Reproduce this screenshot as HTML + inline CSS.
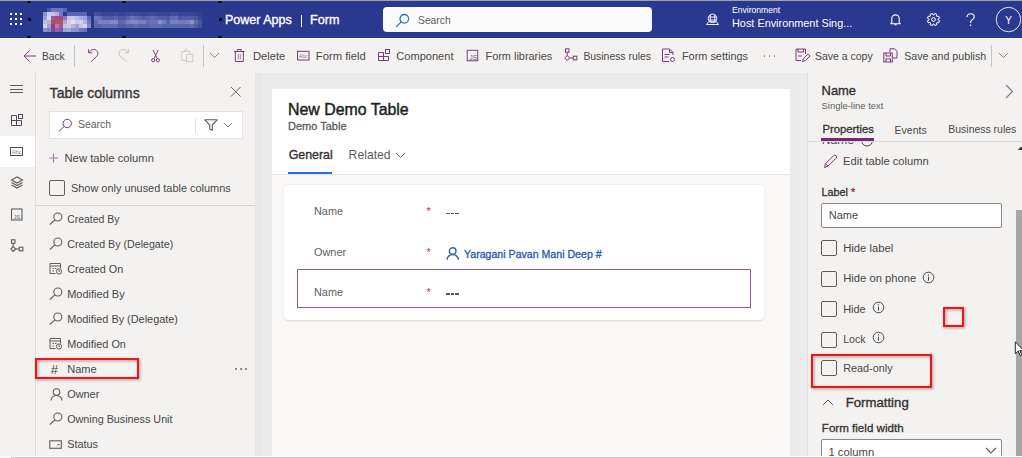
<!DOCTYPE html>
<html><head><meta charset="utf-8"><style>
html,body{margin:0;padding:0;width:1022px;height:458px;overflow:hidden;background:#f3f2f1}
body{position:relative;font-family:"Liberation Sans",sans-serif;-webkit-font-smoothing:antialiased}
.r{position:absolute;display:block}
.t{position:absolute;white-space:nowrap;line-height:1;font-family:"Liberation Sans",sans-serif}
</style></head><body>
<div class="r" style="left:0px;top:1px;width:1022px;height:37px;background:#2a3990"></div>
<div class="r" style="left:0px;top:0px;width:1022px;height:1.4px;background:#a4a49e"></div>
<div class="r" style="left:0px;top:38px;width:1022px;height:35px;background:#f3f2f1"></div>
<div class="r" style="left:0px;top:73px;width:35px;height:383px;background:#f3f2f1"></div>
<div class="r" style="left:35px;top:73px;width:1px;height:383px;background:#e1dfdd"></div>
<div class="r" style="left:0px;top:136px;width:35px;height:31px;background:#ffffff"></div>
<div class="r" style="left:36px;top:73px;width:219px;height:383px;background:#f3f2f1"></div>
<div class="r" style="left:255px;top:73px;width:7px;height:383px;background:#e7e7e7"></div>
<div class="r" style="left:262px;top:73px;width:546px;height:383px;background:#ebebeb"></div>
<div class="r" style="left:272px;top:89px;width:518px;height:85px;background:#ffffff"></div>
<div class="r" style="left:272px;top:174px;width:518px;height:1px;background:#e6e5e4"></div>
<div class="r" style="left:272px;top:175px;width:518px;height:281px;background:#f9f8f7"></div>
<div class="r" style="left:807px;top:73px;width:1px;height:383px;background:#e1dfdd"></div>
<div class="r" style="left:808px;top:73px;width:214px;height:383px;background:#f3f2f1"></div>
<div class="r" style="left:0px;top:456px;width:1022px;height:1px;background:#fbfbfb"></div>
<div class="r" style="left:0px;top:457px;width:1022px;height:1px;background:#c9c9c9"></div>
<div class="r" style="left:10px;top:13px;width:2px;height:2px;background:#fff"></div>
<div class="r" style="left:10px;top:18px;width:2px;height:2px;background:#fff"></div>
<div class="r" style="left:10px;top:23px;width:2px;height:2px;background:#fff"></div>
<div class="r" style="left:15px;top:13px;width:2px;height:2px;background:#fff"></div>
<div class="r" style="left:15px;top:18px;width:2px;height:2px;background:#fff"></div>
<div class="r" style="left:15px;top:23px;width:2px;height:2px;background:#fff"></div>
<div class="r" style="left:20px;top:13px;width:2px;height:2px;background:#fff"></div>
<div class="r" style="left:20px;top:18px;width:2px;height:2px;background:#fff"></div>
<div class="r" style="left:20px;top:23px;width:2px;height:2px;background:#fff"></div>
<div class="r" style="left:43px;top:8px;width:164px;height:24px;filter:blur(0.7px)"><div class="r" style="left:4px;top:0px;width:4px;height:4px;background:#4a56a8"></div><div class="r" style="left:8px;top:0px;width:4px;height:4px;background:#6a74c0"></div><div class="r" style="left:12px;top:0px;width:4px;height:4px;background:#6a74c0"></div><div class="r" style="left:16px;top:0px;width:4px;height:4px;background:#6a74c0"></div><div class="r" style="left:20px;top:0px;width:4px;height:4px;background:#5a64b4"></div><div class="r" style="left:0px;top:4px;width:4px;height:4px;background:#8a92d0"></div><div class="r" style="left:4px;top:4px;width:4px;height:4px;background:#c8ccec"></div><div class="r" style="left:8px;top:4px;width:4px;height:4px;background:#c0c4e8"></div><div class="r" style="left:12px;top:4px;width:4px;height:4px;background:#c8a8d0"></div><div class="r" style="left:16px;top:4px;width:4px;height:4px;background:#7078c0"></div><div class="r" style="left:24px;top:4px;width:4px;height:4px;background:#5a64b4"></div><div class="r" style="left:28px;top:4px;width:4px;height:4px;background:#5a64b4"></div><div class="r" style="left:32px;top:4px;width:4px;height:4px;background:#5a64b4"></div><div class="r" style="left:36px;top:4px;width:4px;height:4px;background:#5a64b4"></div><div class="r" style="left:40px;top:4px;width:4px;height:4px;background:#5a64b4"></div><div class="r" style="left:0px;top:8px;width:4px;height:4px;background:#9ca2d8"></div><div class="r" style="left:4px;top:8px;width:4px;height:4px;background:#d8dcf2"></div><div class="r" style="left:8px;top:8px;width:4px;height:4px;background:#9a5aa0"></div><div class="r" style="left:12px;top:8px;width:4px;height:4px;background:#a04a80"></div><div class="r" style="left:16px;top:8px;width:4px;height:4px;background:#9a4a88"></div><div class="r" style="left:20px;top:8px;width:4px;height:4px;background:#8a78c0"></div><div class="r" style="left:24px;top:8px;width:4px;height:4px;background:#c0c4e8"></div><div class="r" style="left:28px;top:8px;width:4px;height:4px;background:#c8cce8"></div><div class="r" style="left:32px;top:8px;width:4px;height:4px;background:#b8bce4"></div><div class="r" style="left:36px;top:8px;width:4px;height:4px;background:#a8aee0"></div><div class="r" style="left:40px;top:8px;width:4px;height:4px;background:#9aa0d8"></div><div class="r" style="left:44px;top:8px;width:4px;height:4px;background:#6068b8"></div><div class="r" style="left:0px;top:12px;width:4px;height:4px;background:#b8bce6"></div><div class="r" style="left:4px;top:12px;width:4px;height:4px;background:#b0b6e2"></div><div class="r" style="left:8px;top:12px;width:4px;height:4px;background:#a84a78"></div><div class="r" style="left:12px;top:12px;width:4px;height:4px;background:#b8505a"></div><div class="r" style="left:16px;top:12px;width:4px;height:4px;background:#b05068"></div><div class="r" style="left:20px;top:12px;width:4px;height:4px;background:#c8a0c0"></div><div class="r" style="left:24px;top:12px;width:4px;height:4px;background:#d0d4f0"></div><div class="r" style="left:28px;top:12px;width:4px;height:4px;background:#e0e2f4"></div><div class="r" style="left:32px;top:12px;width:4px;height:4px;background:#c8cce8"></div><div class="r" style="left:36px;top:12px;width:4px;height:4px;background:#d0d2ee"></div><div class="r" style="left:40px;top:12px;width:4px;height:4px;background:#b0b4e0"></div><div class="r" style="left:44px;top:12px;width:4px;height:4px;background:#7078c0"></div><div class="r" style="left:0px;top:16px;width:4px;height:4px;background:#d0d4f0"></div><div class="r" style="left:4px;top:16px;width:4px;height:4px;background:#9aa0d8"></div><div class="r" style="left:8px;top:16px;width:4px;height:4px;background:#9a3a80"></div><div class="r" style="left:12px;top:16px;width:4px;height:4px;background:#c87898"></div><div class="r" style="left:16px;top:16px;width:4px;height:4px;background:#8a60a8"></div><div class="r" style="left:20px;top:16px;width:4px;height:4px;background:#c0c4e8"></div><div class="r" style="left:24px;top:16px;width:4px;height:4px;background:#c8cce8"></div><div class="r" style="left:28px;top:16px;width:4px;height:4px;background:#b0b4e0"></div><div class="r" style="left:32px;top:16px;width:4px;height:4px;background:#9ca2d8"></div><div class="r" style="left:36px;top:16px;width:4px;height:4px;background:#c0c4e8"></div><div class="r" style="left:40px;top:16px;width:4px;height:4px;background:#d0d4ee"></div><div class="r" style="left:44px;top:16px;width:4px;height:4px;background:#8088c8"></div><div class="r" style="left:0px;top:20px;width:4px;height:4px;background:#8a92d0"></div><div class="r" style="left:4px;top:20px;width:4px;height:4px;background:#8088c8"></div><div class="r" style="left:8px;top:20px;width:4px;height:4px;background:#6a50a8"></div><div class="r" style="left:12px;top:20px;width:4px;height:4px;background:#9a60a0"></div><div class="r" style="left:16px;top:20px;width:4px;height:4px;background:#7a5ab0"></div><div class="r" style="left:20px;top:20px;width:4px;height:4px;background:#9aa0d8"></div><div class="r" style="left:24px;top:20px;width:4px;height:4px;background:#a0a6da"></div><div class="r" style="left:28px;top:20px;width:4px;height:4px;background:#8a90d0"></div><div class="r" style="left:32px;top:20px;width:4px;height:4px;background:#8a90d0"></div><div class="r" style="left:36px;top:20px;width:4px;height:4px;background:#7078c0"></div><div class="r" style="left:40px;top:20px;width:4px;height:4px;background:#6870bc"></div><div class="r" style="left:51px;top:4px;width:4px;height:4px;background:rgb(66,80,158)"></div><div class="r" style="left:51px;top:8px;width:4px;height:4px;background:rgb(113,123,185)"></div><div class="r" style="left:51px;top:12px;width:4px;height:4px;background:rgb(97,108,176)"></div><div class="r" style="left:51px;top:16px;width:4px;height:4px;background:rgb(89,101,171)"></div><div class="r" style="left:55px;top:4px;width:4px;height:4px;background:rgb(64,77,156)"></div><div class="r" style="left:55px;top:8px;width:4px;height:4px;background:rgb(105,115,180)"></div><div class="r" style="left:55px;top:12px;width:4px;height:4px;background:rgb(121,130,190)"></div><div class="r" style="left:55px;top:16px;width:4px;height:4px;background:rgb(89,101,171)"></div><div class="r" style="left:59px;top:4px;width:4px;height:4px;background:rgb(55,69,152)"></div><div class="r" style="left:59px;top:8px;width:4px;height:4px;background:rgb(81,93,167)"></div><div class="r" style="left:59px;top:12px;width:4px;height:4px;background:rgb(121,130,190)"></div><div class="r" style="left:59px;top:16px;width:4px;height:4px;background:rgb(97,108,176)"></div><div class="r" style="left:63px;top:4px;width:4px;height:4px;background:rgb(55,69,152)"></div><div class="r" style="left:63px;top:8px;width:4px;height:4px;background:rgb(81,93,167)"></div><div class="r" style="left:63px;top:12px;width:4px;height:4px;background:rgb(121,130,190)"></div><div class="r" style="left:63px;top:16px;width:4px;height:4px;background:rgb(97,108,176)"></div><div class="r" style="left:67px;top:4px;width:4px;height:4px;background:rgb(55,69,152)"></div><div class="r" style="left:67px;top:8px;width:4px;height:4px;background:rgb(81,93,167)"></div><div class="r" style="left:67px;top:12px;width:4px;height:4px;background:rgb(128,137,194)"></div><div class="r" style="left:67px;top:16px;width:4px;height:4px;background:rgb(97,108,176)"></div><div class="r" style="left:71px;top:4px;width:4px;height:4px;background:rgb(58,72,153)"></div><div class="r" style="left:71px;top:8px;width:4px;height:4px;background:rgb(89,101,171)"></div><div class="r" style="left:71px;top:12px;width:4px;height:4px;background:rgb(128,137,194)"></div><div class="r" style="left:71px;top:16px;width:4px;height:4px;background:rgb(97,108,176)"></div><div class="r" style="left:75px;top:4px;width:4px;height:4px;background:rgb(53,67,150)"></div><div class="r" style="left:75px;top:8px;width:4px;height:4px;background:rgb(73,86,162)"></div><div class="r" style="left:75px;top:12px;width:4px;height:4px;background:rgb(89,101,171)"></div><div class="r" style="left:75px;top:16px;width:4px;height:4px;background:rgb(81,93,167)"></div><div class="r" style="left:79px;top:4px;width:4px;height:4px;background:rgb(53,67,150)"></div><div class="r" style="left:79px;top:8px;width:4px;height:4px;background:rgb(73,86,162)"></div><div class="r" style="left:79px;top:12px;width:4px;height:4px;background:rgb(97,108,176)"></div><div class="r" style="left:79px;top:16px;width:4px;height:4px;background:rgb(81,93,167)"></div><div class="r" style="left:83px;top:4px;width:4px;height:4px;background:rgb(58,72,153)"></div><div class="r" style="left:83px;top:8px;width:4px;height:4px;background:rgb(89,101,171)"></div><div class="r" style="left:83px;top:12px;width:4px;height:4px;background:rgb(121,130,190)"></div><div class="r" style="left:83px;top:16px;width:4px;height:4px;background:rgb(89,101,171)"></div><div class="r" style="left:87px;top:4px;width:4px;height:4px;background:rgb(64,77,156)"></div><div class="r" style="left:87px;top:8px;width:4px;height:4px;background:rgb(105,115,180)"></div><div class="r" style="left:87px;top:12px;width:4px;height:4px;background:rgb(128,137,194)"></div><div class="r" style="left:87px;top:16px;width:4px;height:4px;background:rgb(89,101,171)"></div><div class="r" style="left:91px;top:4px;width:4px;height:4px;background:rgb(61,75,155)"></div><div class="r" style="left:91px;top:8px;width:4px;height:4px;background:rgb(97,108,176)"></div><div class="r" style="left:91px;top:12px;width:4px;height:4px;background:rgb(128,137,194)"></div><div class="r" style="left:91px;top:16px;width:4px;height:4px;background:rgb(97,108,176)"></div><div class="r" style="left:95px;top:4px;width:4px;height:4px;background:rgb(58,72,153)"></div><div class="r" style="left:95px;top:8px;width:4px;height:4px;background:rgb(89,101,171)"></div><div class="r" style="left:95px;top:12px;width:4px;height:4px;background:rgb(121,130,190)"></div><div class="r" style="left:95px;top:16px;width:4px;height:4px;background:rgb(89,101,171)"></div><div class="r" style="left:99px;top:4px;width:4px;height:4px;background:rgb(55,69,152)"></div><div class="r" style="left:99px;top:8px;width:4px;height:4px;background:rgb(81,93,167)"></div><div class="r" style="left:99px;top:12px;width:4px;height:4px;background:rgb(121,130,190)"></div><div class="r" style="left:99px;top:16px;width:4px;height:4px;background:rgb(89,101,171)"></div><div class="r" style="left:103px;top:4px;width:4px;height:4px;background:rgb(58,72,153)"></div><div class="r" style="left:103px;top:8px;width:4px;height:4px;background:rgb(89,101,171)"></div><div class="r" style="left:103px;top:12px;width:4px;height:4px;background:rgb(97,108,176)"></div><div class="r" style="left:103px;top:16px;width:4px;height:4px;background:rgb(89,101,171)"></div><div class="r" style="left:107px;top:4px;width:4px;height:4px;background:rgb(61,75,155)"></div><div class="r" style="left:107px;top:8px;width:4px;height:4px;background:rgb(97,108,176)"></div><div class="r" style="left:107px;top:12px;width:4px;height:4px;background:rgb(105,115,180)"></div><div class="r" style="left:107px;top:16px;width:4px;height:4px;background:rgb(97,108,176)"></div><div class="r" style="left:111px;top:4px;width:4px;height:4px;background:rgb(58,72,153)"></div><div class="r" style="left:111px;top:8px;width:4px;height:4px;background:rgb(89,101,171)"></div><div class="r" style="left:111px;top:12px;width:4px;height:4px;background:rgb(105,115,180)"></div><div class="r" style="left:111px;top:16px;width:4px;height:4px;background:rgb(97,108,176)"></div><div class="r" style="left:115px;top:4px;width:4px;height:4px;background:rgb(55,69,152)"></div><div class="r" style="left:115px;top:8px;width:4px;height:4px;background:rgb(81,93,167)"></div><div class="r" style="left:115px;top:12px;width:4px;height:4px;background:rgb(136,145,199)"></div><div class="r" style="left:115px;top:16px;width:4px;height:4px;background:rgb(97,108,176)"></div><div class="r" style="left:119px;top:4px;width:4px;height:4px;background:rgb(55,69,152)"></div><div class="r" style="left:119px;top:8px;width:4px;height:4px;background:rgb(81,93,167)"></div><div class="r" style="left:119px;top:12px;width:4px;height:4px;background:rgb(113,123,185)"></div><div class="r" style="left:119px;top:16px;width:4px;height:4px;background:rgb(89,101,171)"></div><div class="r" style="left:123px;top:4px;width:4px;height:4px;background:rgb(53,67,150)"></div><div class="r" style="left:123px;top:8px;width:4px;height:4px;background:rgb(73,86,162)"></div><div class="r" style="left:123px;top:12px;width:4px;height:4px;background:rgb(89,101,171)"></div><div class="r" style="left:123px;top:16px;width:4px;height:4px;background:rgb(89,101,171)"></div><div class="r" style="left:127px;top:4px;width:4px;height:4px;background:rgb(61,75,155)"></div><div class="r" style="left:127px;top:8px;width:4px;height:4px;background:rgb(97,108,176)"></div><div class="r" style="left:127px;top:12px;width:4px;height:4px;background:rgb(121,130,190)"></div><div class="r" style="left:127px;top:16px;width:4px;height:4px;background:rgb(89,101,171)"></div><div class="r" style="left:131px;top:4px;width:4px;height:4px;background:rgb(61,75,155)"></div><div class="r" style="left:131px;top:8px;width:4px;height:4px;background:rgb(97,108,176)"></div><div class="r" style="left:131px;top:12px;width:4px;height:4px;background:rgb(121,130,190)"></div><div class="r" style="left:131px;top:16px;width:4px;height:4px;background:rgb(89,101,171)"></div><div class="r" style="left:135px;top:4px;width:4px;height:4px;background:rgb(53,67,150)"></div><div class="r" style="left:135px;top:8px;width:4px;height:4px;background:rgb(73,86,162)"></div><div class="r" style="left:135px;top:12px;width:4px;height:4px;background:rgb(113,123,185)"></div><div class="r" style="left:135px;top:16px;width:4px;height:4px;background:rgb(89,101,171)"></div><div class="r" style="left:139px;top:4px;width:4px;height:4px;background:rgb(55,69,152)"></div><div class="r" style="left:139px;top:8px;width:4px;height:4px;background:rgb(81,93,167)"></div><div class="r" style="left:139px;top:12px;width:4px;height:4px;background:rgb(113,123,185)"></div><div class="r" style="left:139px;top:16px;width:4px;height:4px;background:rgb(89,101,171)"></div><div class="r" style="left:143px;top:4px;width:4px;height:4px;background:rgb(55,69,152)"></div><div class="r" style="left:143px;top:8px;width:4px;height:4px;background:rgb(81,93,167)"></div><div class="r" style="left:143px;top:12px;width:4px;height:4px;background:rgb(121,130,190)"></div><div class="r" style="left:143px;top:16px;width:4px;height:4px;background:rgb(89,101,171)"></div><div class="r" style="left:147px;top:4px;width:4px;height:4px;background:rgb(55,69,152)"></div><div class="r" style="left:147px;top:8px;width:4px;height:4px;background:rgb(81,93,167)"></div><div class="r" style="left:147px;top:12px;width:4px;height:4px;background:rgb(136,145,199)"></div><div class="r" style="left:147px;top:16px;width:4px;height:4px;background:rgb(97,108,176)"></div><div class="r" style="left:151px;top:4px;width:4px;height:4px;background:rgb(53,67,150)"></div><div class="r" style="left:151px;top:8px;width:4px;height:4px;background:rgb(73,86,162)"></div><div class="r" style="left:151px;top:12px;width:4px;height:4px;background:rgb(97,108,176)"></div><div class="r" style="left:151px;top:16px;width:4px;height:4px;background:rgb(81,93,167)"></div><div class="r" style="left:155px;top:4px;width:4px;height:4px;background:rgb(47,62,147)"></div><div class="r" style="left:155px;top:8px;width:4px;height:4px;background:rgb(57,71,153)"></div><div class="r" style="left:155px;top:12px;width:4px;height:4px;background:rgb(73,86,162)"></div><div class="r" style="left:155px;top:16px;width:4px;height:4px;background:rgb(65,79,157)"></div></div>
<div class="r" style="left:27px;top:0.7px;width:4px;height:2.8px;background:#0a0a0a;border-radius:50%"></div>
<div class="r" style="left:122px;top:0.7px;width:4px;height:2.8px;background:#0a0a0a;border-radius:50%"></div>
<div class="r" style="left:218px;top:0.7px;width:4px;height:2.8px;background:#0a0a0a;border-radius:50%"></div>
<div class="r" style="left:27px;top:35.7px;width:4px;height:2.8px;background:#0a0a0a;border-radius:50%"></div>
<div class="r" style="left:122px;top:35.7px;width:4px;height:2.8px;background:#0a0a0a;border-radius:50%"></div>
<div class="r" style="left:218px;top:35.7px;width:4px;height:2.8px;background:#0a0a0a;border-radius:50%"></div>
<div class="r" style="left:27.5px;top:17.5px;width:3px;height:3px;background:#0a0a0a"></div>
<div class="r" style="left:218.5px;top:17.5px;width:3px;height:3px;background:#0a0a0a"></div>
<div class="t" style="left:225.00px;top:13.72px;font-size:12.5px;color:#ffffff;font-weight:400;-webkit-text-stroke:0.35px #fff">Power Apps</div>
<div class="r" style="left:301px;top:14.5px;width:1.3px;height:12px;background:#fff"></div>
<div class="t" style="left:310.00px;top:13.63px;font-size:12.6px;color:#ffffff;font-weight:400;-webkit-text-stroke:0.35px #fff">Form</div>
<div class="r" style="left:383px;top:7px;width:269px;height:25px;background:#fafafa;border-radius:4px"></div>
<svg class="r" style="left:395px;top:13px;" width="15" height="15" viewBox="0 0 15 15"><circle cx="9.3" cy="5.8" r="4.3" fill="none" stroke="#2f6fc1" stroke-width="1.3"/><line x1="6.2" y1="8.9" x2="1.5" y2="13.6" stroke="#2f6fc1" stroke-width="1.3" stroke-linecap="round"/></svg>
<div class="t" style="left:418.00px;top:16.26px;font-size:10.32px;color:#605e5c;font-weight:400;">Search</div>
<svg class="r" style="left:705px;top:13px;" width="15" height="13" viewBox="0 0 15 13"><g fill="none" stroke="#eef" stroke-width="1"><circle cx="7.5" cy="5.3" r="4.3"/><path d="M5.3 1.8v7M9.7 1.8v7M3.3 4h8.4M3.3 7h8.4"/><path d="M1.5 11.5h12l-2-2.8H3.5z"/></g></svg>
<div class="t" style="left:732.00px;top:6.04px;font-size:8.58px;color:#ffffff;font-weight:400;">Environment</div>
<div class="t" style="left:732.00px;top:17.69px;font-size:10.88px;color:#ffffff;font-weight:400;">Host Environment Sing...</div>
<svg class="r" style="left:889px;top:13px;" width="13" height="13" viewBox="0 0 13 13"><path d="M2.8 10V5.6A3.7 3.7 0 0 1 10.2 5.6V10l1 .8H1.8z" fill="none" stroke="#fff" stroke-width="1.1" stroke-linejoin="round"/><path d="M5.2 11.3a1.3 1.3 0 0 0 2.6 0z" fill="#fff"/></svg>
<svg class="r" style="left:926px;top:12px;" width="15" height="15" viewBox="0 0 15 15"><g fill="none" stroke="#fff" stroke-width="1" stroke-linejoin="round"><circle cx="7.5" cy="7.5" r="1.9"/><path d="M11.98 7.92 L13.59 8.69 L12.64 10.96 L10.96 10.37 L10.37 10.96 L10.96 12.64 L8.69 13.59 L7.92 11.98 L7.08 11.98 L6.31 13.59 L4.04 12.64 L4.63 10.96 L4.04 10.37 L2.36 10.96 L1.41 8.69 L3.02 7.92 L3.02 7.08 L1.41 6.31 L2.36 4.04 L4.04 4.63 L4.63 4.04 L4.04 2.36 L6.31 1.41 L7.08 3.02 L7.92 3.02 L8.69 1.41 L10.96 2.36 L10.37 4.04 L10.96 4.63 L12.64 4.04 L13.59 6.31 L11.98 7.08Z"/></g></svg>
<svg class="r" style="left:966px;top:13px;" width="10" height="14" viewBox="0 0 10 14"><path d="M1 3.9C1 2 2.6 0.8 4.6 0.8 6.6 0.8 8.2 2.1 8.2 3.9 8.2 5.6 7 6.3 5.9 7 5 7.6 4.6 8.2 4.6 9.3V10" fill="none" stroke="#fff" stroke-width="1.1"/><circle cx="4.6" cy="12.3" r="0.8" fill="#fff"/></svg>
<svg class="r" style="left:995px;top:6px;" width="27" height="27" viewBox="0 0 27 27"><circle cx="13.5" cy="13.55" r="12.2" fill="none" stroke="#e8e8f0" stroke-width="1"/></svg>
<div class="t" style="left:1005.20px;top:15.84px;font-size:10px;color:#ffffff;font-weight:400;">Y</div>
<svg class="r" style="left:22px;top:49px;" width="15" height="14" viewBox="0 0 15 14"><path d="M14 7H2M7.5 1.5L2 7l5.5 5.5" fill="none" stroke="#7a3a7a" stroke-width="1"/></svg>
<div class="t" style="left:42.00px;top:51.65px;font-size:10.22px;color:#484746;font-weight:400;">Back</div>
<div class="r" style="left:74px;top:45px;width:1px;height:22px;background:#c8c6c4"></div>
<svg class="r" style="left:87px;top:48px;" width="13" height="15" viewBox="0 0 13 15"><g fill="none" stroke="#7a3a7a" stroke-width="1"><path d="M1.6 1.2V4.8H5.2"/><path d="M2 4.4C4 1.5 7.5 0.5 9.5 2.5 11.5 4.5 11 7 9.5 8.5L4.3 13.5"/></g></svg>
<svg class="r" style="left:118px;top:48px;" width="13" height="15" viewBox="0 0 13 15"><g fill="none" stroke="#c8c6c4" stroke-width="1"><path d="M10.3 1.2V4.8H6.7"/><path d="M9.9 4.4C7.9 1.5 4.4 0.5 2.4 2.5 0.4 4.5 0.9 7 2.4 8.5L8.5 13.5"/></g></svg>
<svg class="r" style="left:150px;top:48px;" width="11" height="15" viewBox="0 0 11 15"><g fill="none" stroke="#7a3a7a" stroke-width="1"><path d="M3 2L7.3 10.6M8.3 2L4 10.6"/><circle cx="3.2" cy="12.2" r="1.6"/><circle cx="7.9" cy="12.2" r="1.6"/></g></svg>
<svg class="r" style="left:180px;top:48px;" width="14" height="15" viewBox="0 0 14 15"><g fill="none" stroke="#cfcdcb" stroke-width="1"><path d="M6 12.5H1.8V3.5H10V6.2"/><path d="M4.2 3.5L5.2 1.3H6.8L7.8 3.5"/><rect x="6.5" y="6.5" width="6.3" height="7.1"/></g></svg>
<div class="r" style="left:203px;top:45px;width:1px;height:22px;background:#c8c6c4"></div>
<svg class="r" style="left:209px;top:52px;" width="11" height="7" viewBox="0 0 11 7"><path d="M1 1l4.5 4.5L10 1" fill="none" stroke="#8a8886" stroke-width="1"/></svg>
<svg class="r" style="left:233px;top:48px;" width="13" height="15" viewBox="0 0 13 15"><g fill="none" stroke="#7a3a7a" stroke-width="1"><path d="M1 3.5h10.5M4.3 3.5V1.5h3.9v2M2.3 3.5v10h8v-10"/><path d="M5.3 6v5.5M7.3 6v5.5" stroke="#9a8aa0"/></g></svg>
<div class="t" style="left:253.00px;top:50.84px;font-size:11.17px;color:#484746;font-weight:400;">Delete</div>
<svg class="r" style="left:296px;top:50px;" width="14" height="11" viewBox="0 0 14 11"><rect x="1.5" y="1.3" width="11.5" height="8.7" fill="none" stroke="#7a3a7a" stroke-width="1"/><text x="7.2" y="7.7" font-size="5.2" font-family="Liberation Sans" text-anchor="middle" fill="#8a8886">Abc</text></svg>
<div class="t" style="left:315.80px;top:50.77px;font-size:11.26px;color:#484746;font-weight:400;">Form field</div>
<svg class="r" style="left:377px;top:48px;" width="14" height="14" viewBox="0 0 14 14"><g fill="none" stroke="#7a3a7a" stroke-width="1"><path d="M1.5 12.5V4.5H6.5V12.5M1.5 8.5H11.5V12.5H1.5"/><rect x="8.5" y="1.5" width="4" height="4"/></g></svg>
<div class="t" style="left:396.30px;top:50.93px;font-size:11.07px;color:#484746;font-weight:400;">Component</div>
<svg class="r" style="left:466px;top:49px;" width="13" height="13" viewBox="0 0 13 13"><rect x="1.2" y="1.3" width="10.5" height="10.5" fill="none" stroke="#7a3a7a" stroke-width="1"/><text x="7.3" y="10.6" font-size="6.3" font-family="Liberation Sans" text-anchor="middle" fill="#5a5a6a">JS</text></svg>
<div class="t" style="left:485.50px;top:51.06px;font-size:10.91px;color:#484746;font-weight:400;">Form libraries</div>
<svg class="r" style="left:564px;top:48px;" width="14" height="14" viewBox="0 0 14 14"><g fill="none" stroke="#7a3a7a" stroke-width="1"><rect x="1.5" y="0.8" width="3.5" height="3.5"/><path d="M3.2 4.3v3.2M3.2 7.5L0.8 10l2.4 2.5L5.6 10z"/><path d="M5.6 10h3.5"/><rect x="9.3" y="8.2" width="3.6" height="3.6"/></g></svg>
<div class="t" style="left:583.40px;top:51.50px;font-size:10.4px;color:#484746;font-weight:400;">Business rules</div>
<svg class="r" style="left:661px;top:48px;" width="15" height="15" viewBox="0 0 15 15"><g fill="none" stroke="#7a3a7a" stroke-width="1"><path d="M8 13.5H1.5V1h7l3.5 3.5V7"/><path d="M8.5 1v3.5H12M3.5 6.5h5M3.5 9h4"/><circle cx="11.5" cy="11.5" r="2"/></g></svg>
<div class="t" style="left:681.90px;top:51.05px;font-size:10.93px;color:#484746;font-weight:400;">Form settings</div>
<div class="r" style="left:763.5px;top:55px;width:1.7px;height:1.7px;background:#8a8886;border-radius:1px"></div>
<div class="r" style="left:768.5px;top:55px;width:1.7px;height:1.7px;background:#8a8886;border-radius:1px"></div>
<div class="r" style="left:773.5px;top:55px;width:1.7px;height:1.7px;background:#8a8886;border-radius:1px"></div>
<svg class="r" style="left:795px;top:48px;" width="15" height="15" viewBox="0 0 15 15"><g fill="none" stroke="#7a3a7a" stroke-width="1"><path d="M6 12.5H1V1h9.5v5"/><path d="M3 1v3h5.5V1M3 8h4"/><path d="M7.5 13.5l1-3 4.5-4.5 2 2-4.5 4.5z"/></g></svg>
<div class="t" style="left:814.90px;top:51.40px;font-size:10.51px;color:#484746;font-weight:400;">Save a copy</div>
<svg class="r" style="left:883px;top:48px;" width="15" height="15" viewBox="0 0 15 15"><g fill="none" stroke="#7a3a7a" stroke-width="1"><rect x="0.8" y="5" width="8.5" height="9"/><path d="M3 5v3h4.5V5M3 14v-3h4.5v3"/><path d="M7 4V0.8h4.5L14 3.3V10h-4"/></g></svg>
<div class="t" style="left:904.20px;top:51.24px;font-size:10.7px;color:#484746;font-weight:400;">Save and publish</div>
<div class="r" style="left:991px;top:45px;width:1px;height:22px;background:#c8c6c4"></div>
<svg class="r" style="left:998px;top:52px;" width="11" height="7" viewBox="0 0 11 7"><path d="M1 1l4.5 4.5L10 1" fill="none" stroke="#8a8886" stroke-width="1"/></svg>
<div class="r" style="left:10px;top:85.0px;width:13px;height:1.1px;background:#605e5c"></div>
<div class="r" style="left:10px;top:88.5px;width:13px;height:1.1px;background:#605e5c"></div>
<div class="r" style="left:10px;top:92.0px;width:13px;height:1.1px;background:#605e5c"></div>
<svg class="r" style="left:10px;top:113px;" width="14" height="14" viewBox="0 0 14 14"><g fill="none" stroke="#56485a" stroke-width="1"><path d="M1.5 12.5V2.5H6.5V12.5M1.5 7.5H11.5V12.5H1.5"/><rect x="8.5" y="1.5" width="4" height="4"/></g></svg>
<svg class="r" style="left:9px;top:146px;" width="15" height="11" viewBox="0 0 15 11"><rect x="1.5" y="1.5" width="12" height="8" fill="none" stroke="#56485a" stroke-width="1"/><text x="7.5" y="7.9" font-size="5.6" font-family="Liberation Sans" text-anchor="middle" fill="#8a8886">Abc</text></svg>
<svg class="r" style="left:10px;top:176px;" width="14" height="13" viewBox="0 0 14 13"><g fill="none" stroke="#605e5c" stroke-width="1.1"><path d="M7 1L1.5 4 7 7l5.5-3z"/><path d="M1.5 6.5L7 9.5l5.5-3M1.5 9L7 12l5.5-3"/></g></svg>
<svg class="r" style="left:10px;top:208px;" width="14" height="13" viewBox="0 0 14 13"><rect x="1.5" y="1" width="10.5" height="11" fill="none" stroke="#605e5c" stroke-width="1.1"/><text x="7" y="10.5" font-size="5.5" font-family="Liberation Sans" text-anchor="middle" fill="#605e5c">JS</text></svg>
<svg class="r" style="left:10px;top:239px;" width="14" height="14" viewBox="0 0 14 14"><g fill="none" stroke="#605e5c" stroke-width="1.1"><rect x="1.5" y="0.8" width="3.5" height="3.5"/><path d="M3.2 4.3v3.2M3.2 7.5L0.8 10l2.4 2.5L5.6 10z"/><path d="M5.6 10h3.5"/><rect x="9.3" y="8.2" width="3.6" height="3.6"/></g></svg>
<div class="t" style="left:49.60px;top:85.86px;font-size:14.1px;color:#3b3a39;font-weight:400;-webkit-text-stroke:0.4px #3b3a39">Table columns</div>
<svg class="r" style="left:230px;top:86px;" width="12" height="12" viewBox="0 0 12 12"><path d="M1 1l9.5 9.5M10.5 1L1 10.5" stroke="#6a6866" stroke-width="1"/></svg>
<div class="r" style="left:49px;top:111px;width:193.5px;height:27.5px;background:#fff;border:1px solid #e6e4e2;box-sizing:border-box"></div>
<svg class="r" style="left:58px;top:118px;" width="15" height="14" viewBox="0 0 15 14"><circle cx="9.2" cy="5.5" r="4.2" fill="none" stroke="#7a3a7a" stroke-width="1"/><line x1="6.2" y1="8.5" x2="1" y2="13.3" stroke="#7a3a7a" stroke-width="1"/></svg>
<div class="t" style="left:78.00px;top:120.18px;font-size:10.42px;color:#605e5c;font-weight:400;">Search</div>
<div class="r" style="left:195px;top:118px;width:1px;height:15px;background:#e1dfdd"></div>
<svg class="r" style="left:204px;top:119px;" width="14" height="12" viewBox="0 0 14 12"><path d="M0.8 0.8h12.4L8.3 6v5.3L5.7 10V6z" fill="none" stroke="#605e5c" stroke-width="1.1" stroke-linejoin="round"/></svg>
<svg class="r" style="left:223px;top:122px;" width="10" height="6" viewBox="0 0 10 6"><path d="M0.8 0.8l4.2 4.2 4.2-4.2" fill="none" stroke="#8a8886" stroke-width="1"/></svg>
<svg class="r" style="left:49px;top:153px;" width="10" height="10" viewBox="0 0 10 10"><path d="M4.5 0.5v9M0 5h9" stroke="#a67ca6" stroke-width="1.1"/></svg>
<div class="t" style="left:64.50px;top:152.77px;font-size:11.26px;color:#484746;font-weight:400;">New table column</div>
<div class="r" style="left:48.5px;top:179.5px;width:16px;height:16px;border:1px solid #605e5c;border-radius:2px;box-sizing:border-box;background:#f3f2f1"></div>
<div class="t" style="left:71.00px;top:182.95px;font-size:10.93px;color:#484746;font-weight:400;">Show only unused table columns</div>
<div class="r" style="left:36px;top:205px;width:219px;height:1px;background:#d6d4d2"></div>
<div class="t" style="left:67.20px;top:214.56px;font-size:10.44px;color:#484746;font-weight:400;">Created By</div>
<svg class="r" style="left:49px;top:212.4px;" width="14" height="13" viewBox="0 0 14 13"><circle cx="8.8" cy="5" r="4" fill="none" stroke="#605e5c" stroke-width="1.1"/><line x1="5.9" y1="7.9" x2="0.8" y2="12.5" stroke="#605e5c" stroke-width="1.1"/></svg>
<div class="t" style="left:67.20px;top:239.28px;font-size:10.66px;color:#484746;font-weight:400;">Created By (Delegate)</div>
<svg class="r" style="left:49px;top:237.3px;" width="14" height="13" viewBox="0 0 14 13"><circle cx="8.8" cy="5" r="4" fill="none" stroke="#605e5c" stroke-width="1.1"/><line x1="5.9" y1="7.9" x2="0.8" y2="12.5" stroke="#605e5c" stroke-width="1.1"/></svg>
<div class="t" style="left:67.20px;top:264.01px;font-size:10.86px;color:#484746;font-weight:400;">Created On</div>
<svg class="r" style="left:49px;top:262.2px;" width="14" height="13" viewBox="0 0 14 13"><g fill="none" stroke="#605e5c" stroke-width="1"><path d="M6.5 11.5H1V1.5h10.5v5"/><path d="M1 4h10.5M3.5 6.5h1.5M6 6.5h1.5M3.5 9h1.5"/><circle cx="10" cy="9.5" r="2.6"/><path d="M10 8.2v1.4h1"/></g></svg>
<div class="t" style="left:67.20px;top:288.99px;font-size:11.0px;color:#484746;font-weight:400;">Modified By</div>
<svg class="r" style="left:49px;top:287.3px;" width="14" height="13" viewBox="0 0 14 13"><circle cx="8.8" cy="5" r="4" fill="none" stroke="#605e5c" stroke-width="1.1"/><line x1="5.9" y1="7.9" x2="0.8" y2="12.5" stroke="#605e5c" stroke-width="1.1"/></svg>
<div class="t" style="left:67.20px;top:313.87px;font-size:10.9px;color:#484746;font-weight:400;">Modified By (Delegate)</div>
<svg class="r" style="left:49px;top:312.1px;" width="14" height="13" viewBox="0 0 14 13"><circle cx="8.8" cy="5" r="4" fill="none" stroke="#605e5c" stroke-width="1.1"/><line x1="5.9" y1="7.9" x2="0.8" y2="12.5" stroke="#605e5c" stroke-width="1.1"/></svg>
<div class="t" style="left:67.20px;top:338.97px;font-size:10.9px;color:#484746;font-weight:400;">Modified On</div>
<svg class="r" style="left:49px;top:337.2px;" width="14" height="13" viewBox="0 0 14 13"><g fill="none" stroke="#605e5c" stroke-width="1"><path d="M6.5 11.5H1V1.5h10.5v5"/><path d="M1 4h10.5M3.5 6.5h1.5M6 6.5h1.5M3.5 9h1.5"/><circle cx="10" cy="9.5" r="2.6"/><path d="M10 8.2v1.4h1"/></g></svg>
<div class="t" style="left:67.20px;top:363.99px;font-size:11.0px;color:#484746;font-weight:400;">Name</div>
<div class="t" style="left:50.80px;top:362.80px;font-size:13px;color:#484746;font-weight:400;">#</div>
<div class="t" style="left:67.20px;top:389.27px;font-size:10.9px;color:#484746;font-weight:400;">Owner</div>
<svg class="r" style="left:49.5px;top:387.5px;" width="13" height="13" viewBox="0 0 13 13"><g fill="none" stroke="#605e5c" stroke-width="1.1"><circle cx="6.5" cy="4" r="3.3"/><path d="M1 12.5a5.5 5 0 0 1 11 0"/></g></svg>
<div class="t" style="left:67.20px;top:414.17px;font-size:10.78px;color:#484746;font-weight:400;">Owning Business Unit</div>
<svg class="r" style="left:49px;top:412.3px;" width="14" height="13" viewBox="0 0 14 13"><circle cx="8.8" cy="5" r="4" fill="none" stroke="#605e5c" stroke-width="1.1"/><line x1="5.9" y1="7.9" x2="0.8" y2="12.5" stroke="#605e5c" stroke-width="1.1"/></svg>
<div class="t" style="left:67.20px;top:439.37px;font-size:10.9px;color:#484746;font-weight:400;">Status</div>
<svg class="r" style="left:49px;top:439.6px;" width="13" height="10" viewBox="0 0 13 10"><rect x="0.8" y="0.8" width="11.5" height="7.5" fill="none" stroke="#605e5c" stroke-width="1.1"/><rect x="8.5" y="4" width="2" height="1.2" fill="#605e5c"/></svg>
<div class="r" style="left:34.7px;top:358.3px;width:104px;height:21px;border:2px solid #f01414;box-sizing:border-box;filter:drop-shadow(1.5px 1.5px 1.5px rgba(0,0,0,0.4))"></div>
<div class="r" style="left:235.3px;top:368.2px;width:2px;height:2px;background:#6e6c6a;border-radius:1px"></div>
<div class="r" style="left:240.3px;top:368.2px;width:2px;height:2px;background:#6e6c6a;border-radius:1px"></div>
<div class="r" style="left:245.3px;top:368.2px;width:2px;height:2px;background:#6e6c6a;border-radius:1px"></div>
<div class="t" style="left:288.00px;top:102.04px;font-size:15.9px;color:#201f1e;font-weight:400;-webkit-text-stroke:0.45px #201f1e">New Demo Table</div>
<div class="t" style="left:288.00px;top:120.99px;font-size:11.0px;color:#605e5c;font-weight:400;-webkit-text-stroke:0.3px #605e5c">Demo Table</div>
<div class="t" style="left:288.70px;top:149.20px;font-size:12.4px;color:#323130;font-weight:400;-webkit-text-stroke:0.35px #323130">General</div>
<div class="r" style="left:288px;top:172px;width:44px;height:2px;background:#2b6de0"></div>
<div class="t" style="left:348.60px;top:149.37px;font-size:12.2px;color:#605e5c;font-weight:400;">Related</div>
<svg class="r" style="left:395px;top:152px;" width="11" height="7" viewBox="0 0 11 7"><path d="M1 1l4.5 4.5L10 1" fill="none" stroke="#605e5c" stroke-width="1"/></svg>
<div class="r" style="left:284px;top:185px;width:479.5px;height:134.5px;background:#fff;border-radius:4px;box-shadow:0 0.5px 2px rgba(0,0,0,0.13)"></div>
<div class="t" style="left:314.00px;top:206.27px;font-size:10.9px;color:#605e5c;font-weight:400;">Name</div>
<div class="t" style="left:426.60px;top:206.49px;font-size:11px;color:#d62828;font-weight:400;">*</div>
<div class="t" style="left:314.00px;top:246.57px;font-size:10.9px;color:#605e5c;font-weight:400;">Owner</div>
<div class="t" style="left:426.60px;top:246.79px;font-size:11px;color:#d62828;font-weight:400;">*</div>
<div class="t" style="left:314.00px;top:287.07px;font-size:10.9px;color:#605e5c;font-weight:400;">Name</div>
<div class="t" style="left:426.60px;top:287.29px;font-size:11px;color:#d62828;font-weight:400;">*</div>
<div class="r" style="left:446.3px;top:212.9px;width:3.4px;height:1.6px;background:#5a5958"></div>
<div class="r" style="left:450.8px;top:212.9px;width:3.4px;height:1.6px;background:#5a5958"></div>
<div class="r" style="left:455.3px;top:212.9px;width:3.4px;height:1.6px;background:#5a5958"></div>
<div class="r" style="left:446.3px;top:293.3px;width:3.4px;height:1.6px;background:#5a5958"></div>
<div class="r" style="left:450.8px;top:293.3px;width:3.4px;height:1.6px;background:#5a5958"></div>
<div class="r" style="left:455.3px;top:293.3px;width:3.4px;height:1.6px;background:#5a5958"></div>
<svg class="r" style="left:445.5px;top:247px;" width="14" height="13" viewBox="0 0 14 13"><g fill="none" stroke="#2c62b6" stroke-width="1.4"><circle cx="6.7" cy="4" r="3.3"/><path d="M1 12.8a5.7 5.2 0 0 1 11.4 0"/></g></svg>
<div class="t" style="left:464.00px;top:248.53px;font-size:10.6px;color:#2c5fae;font-weight:400;-webkit-text-stroke:0.35px #2c5fae">Yaragani Pavan Mani Deep #</div>
<div class="r" style="left:297px;top:269px;width:454px;height:38.6px;border:1px solid #8a5aa3;box-sizing:border-box"></div>
<div class="t" style="left:821.60px;top:84.68px;font-size:12.9px;color:#323130;font-weight:400;-webkit-text-stroke:0.35px #323130">Name</div>
<div class="t" style="left:821.60px;top:100.53px;font-size:9.42px;color:#605e5c;font-weight:400;">Single-line text</div>
<svg class="r" style="left:1004px;top:84px;" width="11" height="15" viewBox="0 0 11 15"><path d="M2 1l6.5 6.5L2 14" fill="none" stroke="#8a6e8a" stroke-width="1.1"/></svg>
<div class="t" style="left:822.40px;top:124.03px;font-size:11.3px;color:#323130;font-weight:400;-webkit-text-stroke:0.3px #323130">Properties</div>
<div class="t" style="left:894.60px;top:124.69px;font-size:10.52px;color:#484746;font-weight:400;">Events</div>
<div class="t" style="left:948.30px;top:125.35px;font-size:10.46px;color:#484746;font-weight:400;">Business rules</div>
<div class="r" style="left:808px;top:141px;width:200px;height:6px;overflow:hidden"><div class="t" style="left:13.8px;top:-6.757999999999996px;font-size:12px;color:#484746">Name</div><svg class="r" style="left:53px;top:-7.3px" width="12" height="14" viewBox="0 0 12 14"><circle cx="6" cy="6.5" r="5.5" fill="none" stroke="#484746" stroke-width="1"/></svg></div>
<div class="r" style="left:808px;top:140.5px;width:214px;height:1px;background:#dcdad8"></div>
<div class="r" style="left:821px;top:138px;width:53px;height:2.5px;background:#742774"></div>
<svg class="r" style="left:823px;top:154px;" width="15" height="15" viewBox="0 0 15 15"><path d="M1.5 13.5l1-3.8 8-8a1.6 1.6 0 0 1 2.5 2.5l-8 8z M2.5 9.7l2.5 2.5" fill="none" stroke="#7a3a7a" stroke-width="1" stroke-linejoin="round"/></svg>
<div class="t" style="left:843.10px;top:156.45px;font-size:11.16px;color:#484746;font-weight:400;">Edit table column</div>
<div class="t" style="left:821.50px;top:187.16px;font-size:10.8px;color:#323130;font-weight:400;-webkit-text-stroke:0.3px #323130">Label <span style='color:#a4262c;-webkit-text-stroke:0.3px #a4262c'>*</span></div>
<div class="r" style="left:820.8px;top:202.8px;width:181px;height:25.5px;background:#fff;border:1px solid #8a8886;border-radius:2px;box-sizing:border-box"></div>
<div class="t" style="left:828.70px;top:210.28px;font-size:11.01px;color:#484746;font-weight:400;">Name</div>
<div class="r" style="left:821px;top:240px;width:16px;height:16px;border:1px solid #605e5c;border-radius:2px;box-sizing:border-box"></div>
<div class="t" style="left:843.20px;top:243.24px;font-size:11.29px;color:#484746;font-weight:400;">Hide label</div>
<div class="r" style="left:821px;top:270.6px;width:16px;height:16px;border:1px solid #605e5c;border-radius:2px;box-sizing:border-box"></div>
<div class="t" style="left:843.20px;top:272.79px;font-size:11.24px;color:#484746;font-weight:400;">Hide on phone</div>
<svg class="r" style="left:922.0px;top:270.5px;" width="13" height="13" viewBox="0 0 13 13"><circle cx="6.5" cy="6.5" r="5.3" fill="none" stroke="#484746" stroke-width="1"/><rect x="6" y="5.6" width="1" height="4" fill="#484746"/><circle cx="6.5" cy="3.9" r="0.65" fill="#484746"/></svg>
<div class="r" style="left:821px;top:300.8px;width:16px;height:16px;border:1px solid #605e5c;border-radius:2px;box-sizing:border-box"></div>
<div class="t" style="left:843.20px;top:303.57px;font-size:10.9px;color:#484746;font-weight:400;">Hide</div>
<svg class="r" style="left:872.0px;top:301.0px;" width="13" height="13" viewBox="0 0 13 13"><circle cx="6.5" cy="6.5" r="5.3" fill="none" stroke="#484746" stroke-width="1"/><rect x="6" y="5.6" width="1" height="4" fill="#484746"/><circle cx="6.5" cy="3.9" r="0.65" fill="#484746"/></svg>
<div class="r" style="left:821px;top:331.5px;width:16px;height:16px;border:1px solid #605e5c;border-radius:2px;box-sizing:border-box"></div>
<div class="t" style="left:843.20px;top:334.23px;font-size:10.6px;color:#484746;font-weight:400;">Lock</div>
<svg class="r" style="left:872.0px;top:331.4px;" width="13" height="13" viewBox="0 0 13 13"><circle cx="6.5" cy="6.5" r="5.3" fill="none" stroke="#484746" stroke-width="1"/><rect x="6" y="5.6" width="1" height="4" fill="#484746"/><circle cx="6.5" cy="3.9" r="0.65" fill="#484746"/></svg>
<div class="r" style="left:821px;top:360.3px;width:16px;height:16px;border:1px solid #605e5c;border-radius:2px;box-sizing:border-box"></div>
<div class="t" style="left:843.20px;top:363.42px;font-size:10.85px;color:#484746;font-weight:400;">Read-only</div>
<div class="r" style="left:943px;top:306.5px;width:20.5px;height:20.5px;border:2px solid #f01414;box-sizing:border-box;filter:drop-shadow(1.5px 1.5px 1.5px rgba(0,0,0,0.4))"></div>
<div class="r" style="left:811.3px;top:354.3px;width:120.7px;height:33.5px;border:2px solid #f01414;box-sizing:border-box;filter:drop-shadow(1.5px 1.5px 1.5px rgba(0,0,0,0.4))"></div>
<svg class="r" style="left:821.5px;top:399px;" width="12" height="7" viewBox="0 0 12 7"><path d="M1 6l5-5 5 5" fill="none" stroke="#605e5c" stroke-width="1"/></svg>
<div class="t" style="left:845.70px;top:396.03px;font-size:13.2px;color:#323130;font-weight:400;-webkit-text-stroke:0.35px #323130">Formatting</div>
<div class="t" style="left:821.80px;top:421.98px;font-size:11.6px;color:#323130;font-weight:400;-webkit-text-stroke:0.3px #323130">Form field width</div>
<div class="r" style="left:821px;top:439px;width:181px;height:30px;background:#fff;border:1px solid #8a8886;border-radius:2px;box-sizing:border-box"></div>
<div class="t" style="left:828.40px;top:446.64px;font-size:11.29px;color:#484746;font-weight:400;">1 column</div>
<svg class="r" style="left:985px;top:447px;" width="12" height="8" viewBox="0 0 12 8"><path d="M1 1l5 5 5-5" fill="none" stroke="#605e5c" stroke-width="1.1"/></svg>
<svg class="r" style="left:1016px;top:145px;" width="8" height="6" viewBox="0 0 8 6"><path d="M5 1.5L1.8 5h6.4z" fill="#3a3a3a"/></svg>
<div class="r" style="left:1016px;top:209.7px;width:6px;height:246.3px;background:#a6a6a6"></div>
<svg class="r" style="left:1014px;top:340.5px;" width="10" height="16" viewBox="0 0 10 16"><path d="M1.3 0.8v12l2.9-2.7 2 4.5 1.6-.7-2-4.4h3.9z" fill="#fff" stroke="#111" stroke-width="0.9"/></svg>
<div class="r" style="left:0px;top:456px;width:1022px;height:1px;background:#fbfbfb"></div>
<div class="r" style="left:11px;top:457px;width:1011px;height:1px;background:#c9c9c9"></div>
<div class="r" style="left:0px;top:457px;width:11px;height:1px;background:#f3f3f3"></div>
</body></html>
